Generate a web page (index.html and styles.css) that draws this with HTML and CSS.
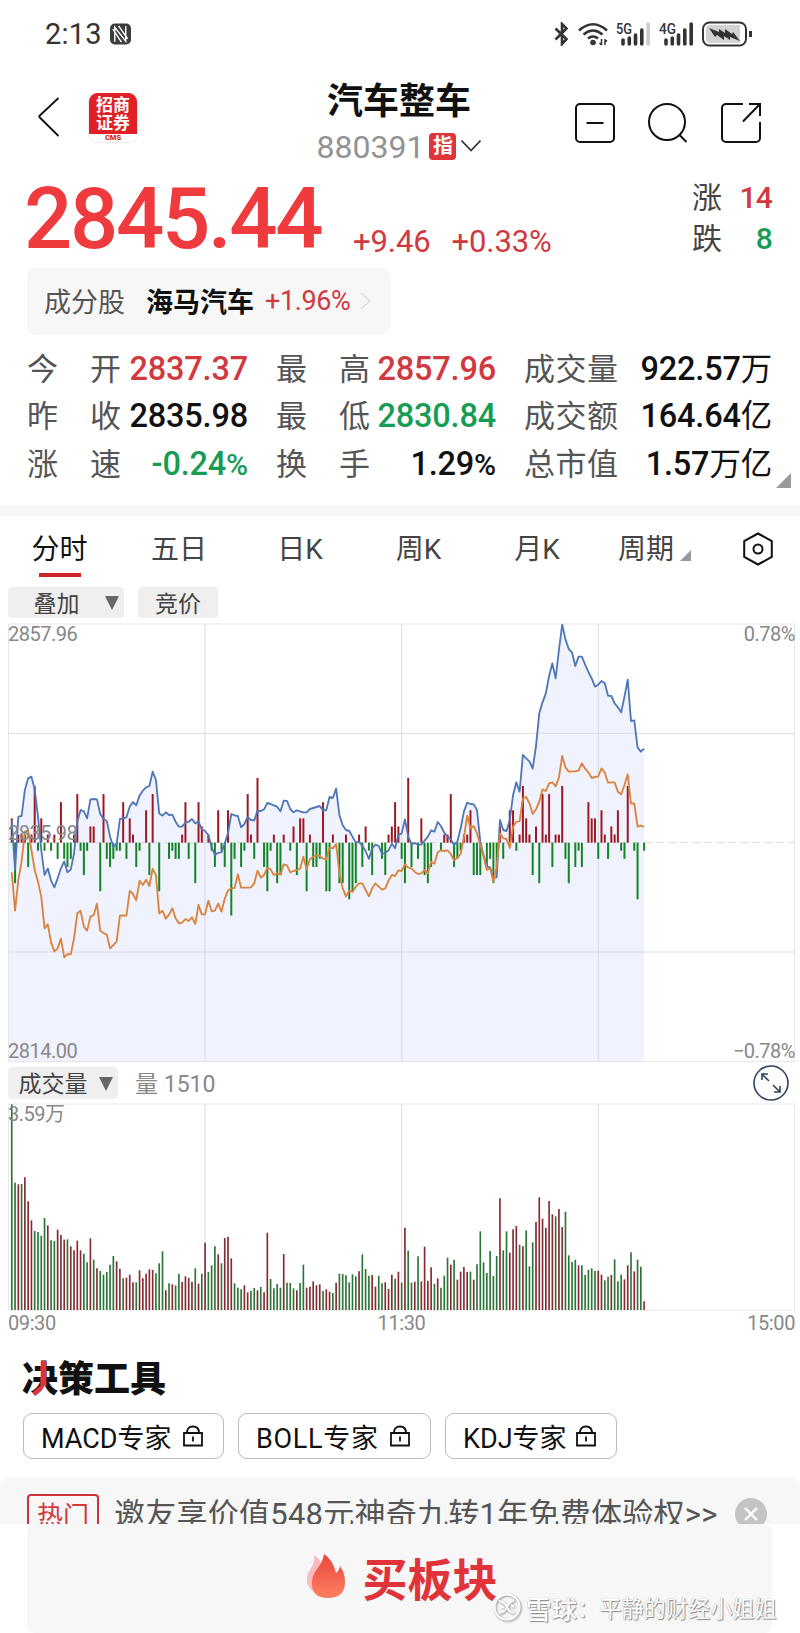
FILE: index.html
```html
<!DOCTYPE html>
<html lang="zh-CN">
  <head>
    <meta charset="UTF-8">
    <meta name="viewport" content="width=device-width, initial-scale=1">
    <title>汽车整车 880391</title>
    <link rel="stylesheet" href="styles.css">
  </head>

  <body>
    <div class="status-bar">
      <span class="status-time">2:13</span>
      <svg class="status-nfc" width="21" height="22" viewBox="0 0 22 22">
        <rect x="0" y="0" width="22" height="22" rx="5" fill="#3c3c3c"/>
        <path d="M5 19V4l11.500 14.500V3M9 2.500l9.500 13.500M3 6l9 13.500" stroke="#fff" stroke-width="1.500" fill="none"/>
      </svg>
      <div class="status-icons">
        <svg width="16" height="24" viewBox="0 0 16 24" fill="none" stroke="#333" stroke-width="2.600">
          <path d="M1.500 6.500l11 10.500-4.500 5V2l4.500 4.500L1.500 17.500"/>
        </svg>
        <svg width="30" height="24" viewBox="0 0 30 24" fill="none" stroke="#333" stroke-width="2.600">
          <path d="M1 8.500Q15-4 29 8.500M5.500 12.500q9.500-8 19 0M10 16.500q5-4 10 0"/>
          <circle cx="15" cy="20.500" r="2.800" fill="#333" stroke="none"/>
          <path d="M23.500 17v6M21.500 21l2 2M27 23v-6M27 17.500l2 2" stroke-width="1.500"/>
        </svg>
        <svg width="35" height="25" viewBox="0 0 35 25">
          <text class="network" x="0" y="11.500" textLength="16" lengthAdjust="spacingAndGlyphs">5G</text>
          <path d="M7 18v4M13.300 16v6M19.500 13v9M25.800 8v14" stroke="#333" stroke-width="3.600" stroke-linecap="round"/>
          <path d="M32.200 2v20" stroke="#ccc" stroke-width="3.600" stroke-linecap="round"/>
        </svg>
        <svg width="35" height="25" viewBox="0 0 35 25">
          <text class="network" x="0" y="11.500" textLength="17" lengthAdjust="spacingAndGlyphs">4G</text>
          <path d="M7 18v4M13.300 16v6M19.500 13v9M25.800 8v14M32.200 2v20" stroke="#333" stroke-width="3.600" stroke-linecap="round"/>
        </svg>
        <svg width="50" height="26" viewBox="0 0 50 26">
          <rect x="1" y="1.500" width="43" height="23" rx="6.500" fill="#fff" stroke="#333" stroke-width="2"/>
          <path d="M8 4h30v18H8a4 4 0 0 1-4-4V8a4 4 0 0 1 4-4z" fill="#d2d2d2"/>
          <path d="M7 7l10 4 0-3 6 4 0-4 7 5 1-2 7 9-10-4 0 3-6-4 0 4-7-5-2 2z" fill="#333"/>
          <path d="M48.500 10v6" stroke="#333" stroke-width="3"/>
        </svg>
      </div>
    </div>

    <div class="header">
      <svg class="back" width="22" height="40" viewBox="0 0 22 40" fill="none" stroke="#111" stroke-width="1.800">
        <path d="M20.500 1L1.800 18.500q-1 1 0 2L20.500 39"/>
      </svg>
      <div class="broker">
        <div class="broker-name">招商<br>证券</div>
        <div class="broker-code">CMS</div>
      </div>
      <div class="title">
        <h1>汽车整车</h1>
        <div class="title-code">
          <span>880391</span>
          <b>指</b>
          <svg width="20" height="12" viewBox="0 0 20 12" fill="none" stroke="#333" stroke-width="1.600"><path d="M.5.5L10 10.500 19.500.5"/></svg>
        </div>
      </div>
      <div class="actions">
        <svg width="40" height="40" viewBox="0 0 40 40" fill="none" stroke="#111" stroke-width="2">
          <rect x="1" y="1" width="38" height="38" rx="4"/><path d="M11.500 20h17"/>
        </svg>
        <svg width="40" height="40" viewBox="0 0 40 40" fill="none" stroke="#111" stroke-width="2">
          <circle cx="19" cy="19" r="18"/><path d="M31.500 32l7 7"/>
        </svg>
        <svg width="41" height="40" viewBox="0 0 41 40" fill="none" stroke="#111" stroke-width="2">
          <path d="M22 1H5a4 4 0 0 0-4 4v30a4 4 0 0 0 4 4h30a4 4 0 0 0 4-4V19M28 1h11v12M39 1L22 18.500"/>
        </svg>
      </div>
    </div>

    <div class="quote">
      <span class="price">2845.44</span>
      <span class="change">+9.46</span>
      <span class="change">+0.33%</span>
      <div class="counts">
        <span>涨</span><span class="count up">14</span>
        <span>跌</span><span class="count down">8</span>
      </div>
    </div>

    <div class="component">
      <span class="component-label">成分股</span>
      <b>海马汽车</b>
      <span class="component-change">+1.96%</span>
      <svg width="11" height="18" viewBox="0 0 11 18" fill="none" stroke="#ddd" stroke-width="1.500"><path d="M1 1l9 8-9 8"/></svg>
    </div>

    <div class="stats">
      <div class="label"><i>今</i><i>开</i></div><div class="value up">2837.37</div>
      <div class="label"><i>最</i><i>高</i></div><div class="value up">2857.96</div>
      <div class="label"><i>成</i><i>交</i><i>量</i></div><div class="value">922.57<i>万</i></div>
      <div class="label"><i>昨</i><i>收</i></div><div class="value">2835.98</div>
      <div class="label"><i>最</i><i>低</i></div><div class="value down">2830.84</div>
      <div class="label"><i>成</i><i>交</i><i>额</i></div><div class="value">164.64<i>亿</i></div>
      <div class="label"><i>涨</i><i>速</i></div><div class="value down">-0.24<small>%</small></div>
      <div class="label"><i>换</i><i>手</i></div><div class="value">1.29<small>%</small></div>
      <div class="label"><i>总</i><i>市</i><i>值</i></div><div class="value">1.57<i>万亿</i></div>
      <span class="stats-more"></span>
    </div>

    <div class="tabs">
      <span class="tab tab-active">分时</span>
      <span class="tab">五日</span>
      <span class="tab">日K</span>
      <span class="tab">周K</span>
      <span class="tab">月K</span>
      <span class="tab tab-period">周期</span>
      <svg class="settings" width="30" height="34" viewBox="0 0 30 34" fill="none" stroke="#111" stroke-width="2">
        <path d="M15 1.500l13.800 7.500v16L15 32.500 1.200 25V9z"/><circle cx="15" cy="17" r="4.500"/>
      </svg>
    </div>

    <div class="toolbar">
      <span class="chip chip-overlay">叠加<i class="caret"></i></span>
      <span class="chip chip-auction">竞价</span>
    </div>

    <div class="chart">
      <svg id="priceChart" width="787" height="439" viewBox="23.500 12 2361 1317"></svg>
      <span class="axis axis-top">2857.96</span>
      <span class="axis axis-middle">2835.98</span>
      <span class="axis axis-bottom">2814.00</span>
      <span class="axis axis-top axis-right">0.78%</span>
      <span class="axis axis-bottom axis-right">−0.78%</span>
    </div>

    <div class="toolbar toolbar-volume">
      <span class="chip chip-volume">成交量<i class="caret"></i></span>
      <span class="volume-now">量 1510</span>
      <svg class="expand" width="36" height="36" viewBox="0 0 36 36" fill="none" stroke="#2f4460" stroke-width="1.600">
        <circle cx="18" cy="18" r="17"/>
        <path d="M16 16L9 9M9 15V9h6M20 20l7 7M27 21v6h-6"/>
      </svg>
    </div>

    <div class="chart chart-volume">
      <svg id="volumeChart" width="787" height="207" viewBox="23.500 132 2361 621"></svg>
      <span class="axis axis-top">3.59万</span>
    </div>
    <div class="times"><span>09:30</span><span>11:30</span><span>15:00</span></div>

    <h2><span class="accent" data-text="决">决</span>策工具</h2>
    <div class="tools">
      <div class="tool">MACD专家<svg class="lock" viewBox="0 0 20 22"><path d="M1 8h18v12.500H1zM4 8q0-6.500 6-6.500T16 8M10 11.500v5"/></svg></div>
      <div class="tool tool-boll">BOLL专家<svg class="lock" viewBox="0 0 20 22"><path d="M1 8h18v12.500H1zM4 8q0-6.500 6-6.500T16 8M10 11.500v5"/></svg></div>
      <div class="tool tool-kdj">KDJ专家<svg class="lock" viewBox="0 0 20 22"><path d="M1 8h18v12.500H1zM4 8q0-6.500 6-6.500T16 8M10 11.500v5"/></svg></div>
    </div>

    <div class="banner">
      <span class="hot">热门</span>
      <span class="banner-text">邀友享价值548元神奇九转1年免费体验权&gt;&gt;</span>
      <svg class="close" width="32" height="32" viewBox="0 0 32 32">
        <circle cx="16" cy="16" r="16" fill="#c4c4c4"/>
        <path d="M10 10l12 12M22 10L10 22" stroke="#fff" stroke-width="2.400"/>
      </svg>
    </div>

    <div class="footer">
      <div class="buy">
        <svg width="40" height="46" viewBox="0 0 40 46">
          <defs>
            <linearGradient id="fire" x1="0" y1="0" x2="0" y2="1">
              <stop offset="0" stop-color="#e8453c"/><stop offset="1" stop-color="#ff8160"/>
            </linearGradient>
          </defs>
          <path d="M8 1q6 4 8 9v29Q1 38 1 26q0-6 4-12 4-5 3-13z" fill="#f8bcc0"/>
          <path d="M18 0q9 6 12 19 3-2 4-7 5 7 5 16 0 16-17 16T6 28q0-6 5-13 6-7 7-15z" fill="url(#fire)"/>
        </svg>
        <span>买板块</span>
      </div>
    </div>

    <div class="watermark">
      <svg width="28" height="28" viewBox="0 0 28 28" fill="none" stroke="#fff" stroke-width="2">
        <circle cx="14" cy="14" r="12.500"/><path d="M6 8q6 1 8 6t7 6M21 7q-5 2-7 7t-8 6M8 13l3 2M18 12l3 2"/>
      </svg>
      <b>雪球</b><span>：平静的财经小姐姐</span>
    </div>

    <script>
      // one value per minute since 09:30
      const price = [
        600, 750, 590, 588, 510, 475, 470, 508, 590, 690, 765, 745, 782, 802, 775, 745, 724, 757, 748, 700,
        605, 570, 574, 595, 538, 537, 538, 582, 597, 603, 650, 680, 672, 597, 595, 592, 560, 546, 556, 527,
        512, 502, 498, 455, 480, 580, 587, 577, 585, 584, 605, 620, 620, 608, 605, 597, 610, 605, 628, 633,
        645, 682, 705, 698, 697, 670, 640, 582, 586, 588, 622, 612, 591, 600, 601, 572, 573, 568, 549, 552,
        556, 560, 574, 542, 543, 567, 577, 571, 574, 577, 577, 567, 564, 561, 558, 571, 570, 531, 534, 506,
        585, 616, 630, 633, 650, 668, 665, 678, 693, 717, 685, 674, 678, 702, 698, 691, 671, 685, 645, 640,
        598, 650, 672, 669, 674, 674, 662, 650, 631, 635, 606, 618, 638, 650, 658, 675, 665, 625, 575, 548,
        552, 553, 570, 665, 705, 740, 742, 773, 772, 600, 630, 633, 600, 525, 487, 515, 405, 415, 424, 446,
        378, 280, 247, 220, 168, 130, 175, 90, 14, 58, 87, 97, 138, 110, 110, 134, 156, 175, 200, 194,
        183, 190, 227, 228, 250, 262, 277, 230, 179, 303, 301, 382, 395, 386
      ];
      const average = [
        757, 872, 780, 725, 635, 632, 690, 750, 785, 830, 925, 913, 968, 994, 985, 956, 1012, 1002, 1003, 955,
        880, 872, 920, 932, 890, 885, 851, 932, 939, 944, 986, 975, 965, 887, 886, 887, 813, 822, 841, 782,
        795, 779, 798, 747, 765, 880, 872, 896, 884, 865, 895, 910, 908, 897, 903, 892, 912, 855, 883, 883,
        842, 874, 872, 851, 875, 836, 812, 805, 804, 763, 803, 803, 803, 802, 790, 752, 773, 765, 744, 748,
        765, 760, 764, 733, 736, 757, 753, 750, 746, 710, 748, 718, 710, 706, 708, 716, 718, 683, 685, 672,
        760, 805, 829, 812, 816, 800, 790, 790, 810, 829, 805, 790, 800, 809, 805, 782, 765, 768, 751, 753,
        733, 743, 745, 756, 762, 760, 750, 760, 725, 731, 697, 691, 693, 691, 702, 721, 714, 702, 652, 587,
        625, 618, 640, 675, 710, 750, 745, 785, 740, 640, 655, 657, 684, 620, 605, 604, 535, 531, 550, 582,
        568, 545, 508, 513, 490, 487, 499, 472, 408, 442, 455, 454, 454, 452, 430, 446, 457, 474, 471, 469,
        445, 458, 488, 487, 487, 515, 523, 495, 463, 551, 550, 620, 617, 621
      ];
      const strength = [
        3, -5, 1, 1, 1, -3, 1, 7, -1, 3, -1, 1, -1, 1, -2, 5, -2, -3, -2, 1,
        6, -1, -4, -1, 2, 2, 0, -6, 6, -2, -3, -2, -1, -1, 5, -2, 3, 1, -3, -1,
        0, 4, -4, 6, 0, -6, 0, 0, -2, -1, -2, -2, 1, 5, -2, 0, -5, 5, 2, 0,
        1, -1, -3, 4, -1, -3, 4, -9, -2, 0, -3, -1, 6, 1, -2, 8, 0, -3, -6, -1,
        1, -5, -4, 1, 0, -1, 2, -4, 3, 3, -6, 1, -3, -3, -2, 5, -6, -6, 1, 0,
        -5, -5, 1, -7, -6, -5, 1, -3, 2, -1, -4, 0, 0, -2, -4, 1, 2, 5, 2, -2,
        -5, 8, -3, 0, -2, 3, -4, -5, -3, 0, 0, -1, 1, 1, 6, -3, -2, -1, 1, 1,
        4, -4, -4, -4, 0, -3, -2, -5, -3, 2, -2, 0, 4, 4, -1, 1, 7, 3, 1, -4,
        2, -5, 6, 1, 6, -3, 1, 1, 7, -2, -5, 0, -3, -1, -3, 0, 5, 3, 3, -2,
        4, 1, -2, 2, 1, 4, -1, -2, 7, 0, -1, -7, 0, -1
      ];
      // negative = falling minute
      const volume = [
        -617, -382, 377, -378, 398, 326, 269, -237, -234, -223, -276, 254, -209, -207, 241, 225, 211, -212, 191, 179,
        208, 179, -169, -143, 215, -151, 125, -117, -106, -114, -136, -162, 146, 124, -95, 97, 106, 83, -83, 119,
        95, 109, 122, 120, -110, -140, -176, 59, -80, 77, -74, -109, 84, 101, 96, 85, -125, 79, -109, 202,
        -114, -134, -191, 167, -140, 216, 220, 155, -80, -67, -62, 74, 53, -57, -66, 59, -69, 53, 232, -93,
        -65, -78, -67, 168, -82, -81, -65, 59, -81, -136, 67, 70, 86, 74, 77, -57, 62, 55, -51, 82,
        -109, -108, -104, -83, -107, -101, 116, -167, -123, -103, 105, 70, -103, -80, 83, 63, 106, -94, 115, -82,
        247, -178, -82, 85, -161, 86, 190, 88, 128, -79, 95, -67, -103, -157, 136, -151, 91, 115, 129, 114,
        -115, 91, -137, -236, -143, -111, -177, -102, -162, 335, -179, -236, 172, 242, 252, -196, 191, -239, -131, -203,
        264, 338, 274, 247, 327, 287, -281, 303, 249, -295, -164, -144, -151, 134, -134, -105, -120, -125, -117, 118,
        106, -89, -100, 105, -152, -86, -106, 92, 134, -173, 116, -151, -130, 26
      ];

      const x = i => (25 + (i + 1) * 9.829).toFixed(1);
      const line = data => data.map((y, i) => `${x(i)},${y}`).join(' ');
      const bars = (data, base, unit, name) => data.map((v, i) =>
        v ? `<path class="${name} ${v > 0 ? 'bar-up' : 'bar-down'}" d="M${x(i)} ${base}V${name === 'volume' ? base - Math.abs(v) : base - v * unit}"/>` : ''
      ).join('');

      document.querySelector('#priceChart').innerHTML = `
        <polygon class="area" points="25,1325 25,640 ${line(price)} ${x(193)},1325"/>
        <path class="grid" d="M25 340H2384M25 996H2384M614.500 12V1325M1204.500 12V1325M1794.500 12V1325"/>
        <path class="frame" d="M25 12H2383V1325H25Z"/>
        <path class="zero" d="M25 668H2384"/>
        ${bars(strength, 668, 24.3, 'strength')}
        <polyline class="price-line" points="${line(price)}"/>
        <polyline class="average-line" points="${line(average)}"/>`;

      document.querySelector('#volumeChart').innerHTML = `
        <path class="grid" d="M614.500 132V749M1204.500 132V749M1794.500 132V749"/>
        <path class="frame" d="M25 132H2383V750H25Z"/>
        ${bars(volume, 750, 1, 'volume')}`;
    </script>
  </body>
</html>
```

FILE: styles.css
```css
* {
  box-sizing: border-box;
}

body {
  position: relative;
  width: 800px;
  height: 1633px;
  margin: 0;
  overflow: hidden;
  background: #fff;
  color: #111;
  font-family: Roboto, "Noto Sans CJK SC", sans-serif;
}

i {
  font-style: normal;
}

.up {
  color: #d13840;
}

.down {
  color: #179c55;
}

/* status bar */
.status-bar {
  height: 68px;
  padding: 0 48px 0 45px;
  display: flex;
  align-items: center;
}

.status-time {
  font-size: 29px;
  color: #333;
  width: 56px;
  letter-spacing: 0.2px;
}

.status-nfc {
  margin-left: 9px;
}

.status-icons {
  margin-left: auto;
  display: flex;
  align-items: center;
  gap: 8px;
}

.network {
  font-size: 14px;
  font-weight: 500;
  fill: #333;
}

/* header */
.header {
  height: 102px;
  padding: 0 38px 0 38px;
  display: grid;
  grid-template-columns: 50px 50px 1fr 187px;
}

.back {
  margin-top: 29px;
}

.broker {
  width: 50px;
  height: 50px;
  margin-top: 25px;
  border: 1px solid #eee;
  border-top: 0;
  border-radius: 9px;
  background: #fff;
  overflow: hidden;
  text-align: center;
}

.broker-name {
  height: 41px;
  padding-top: 3px;
  background: #e02027;
  color: #fff;
  font-size: 17px;
  line-height: 18px;
  font-weight: 700;
}

.broker-code {
  color: #d0262c;
  font-size: 7.500px;
  line-height: 7px;
  font-weight: 900;
}

.title {
  text-align: center;
  padding: 14px 0 0 85px;
}

h1 {
  margin: 0;
  font-size: 36px;
  line-height: 40px;
  font-weight: 700;
}

.title-code {
  display: flex;
  justify-content: center;
  align-items: center;
  gap: 5px;
  height: 48px;
  font-size: 32px;
  color: #929292;
}

.title-code span {
  padding-top: 2px;
}

.title-code b {
  width: 27px;
  height: 27px;
  border-radius: 4px;
  background: #e0333a;
  color: #fff;
  font-size: 20px;
  line-height: 26px;
  text-align: center;
}

.actions {
  display: flex;
  justify-content: space-between;
  padding-top: 35px;
}

/* quote */
.quote {
  height: 98px;
  padding: 0 28px 0 24px;
  display: flex;
  align-items: baseline;
}

.price {
  width: 329px;
  font-size: 85px;
  line-height: 98px;
  font-weight: 500;
  letter-spacing: -2.300px;
  color: #ef3b3d;
}

.change {
  margin-right: 21px;
  padding-top: 3px;
  font-size: 31px;
  color: #d13840;
  letter-spacing: -0.1px;
  transform: translateY(4px);
}

.counts {
  align-self: flex-start;
  margin-left: auto;
  width: 80px;
  padding-top: 7px;
  display: grid;
  grid-template-columns: 31px 1fr;
  font-size: 30px;
  line-height: 41px;
  color: #444;
}

.count {
  text-align: right;
  font-size: 30px;
  font-weight: 500;
  letter-spacing: -0.8px;
}

.count.up {
  color: #d13840;
}

.count.down {
  color: #179c55;
}

.component {
  width: 363px;
  height: 67px;
  margin-left: 27px;
  padding: 0 17px 2px;
  display: flex;
  align-items: center;
  border-radius: 8px;
  background: #f7f7f7;
  font-size: 27px;
}

.component-label {
  color: #555;
  width: 102px;
}

.component-change {
  margin: 0 10px 0 11px;
  color: #d13840;
  letter-spacing: -0.4px;
}

/* stats */
.stats {
  position: relative;
  height: 170px;
  padding: 10.500px 28px 0 27px;
  display: grid;
  grid-template-columns: 94px 127px 122px 126px 122px 1fr;
  grid-auto-rows: 47.7px;
  font-size: 31px;
  line-height: 47.7px;
}

.label {
  width: 94px;
  justify-self: end;
  display: flex;
  justify-content: space-between;
  color: #555;
}

.value {
  text-align: right;
  font-weight: 500;
  font-size: 32.500px;
  letter-spacing: -0.2px;
  white-space: nowrap;
}

.value i {
  font-size: 31.500px;
  font-weight: 400;
}

.value small {
  font-size: 30px;
}

.stats-more {
  position: absolute;
  right: 9px;
  bottom: 17px;
  border-left: 15px solid transparent;
  border-bottom: 15px solid #999;
}

/* tabs */
.tabs {
  height: 78px;
  border-top: 11px solid #f7f7f7;
  padding: 0 27px 0 0;
  display: grid;
  grid-template-columns: 119px 120px 122px 115px 122px 122px 1fr;
  align-items: center;
  text-align: center;
}

.tab {
  position: relative;
  font-size: 28px;
  line-height: 67px;
  color: #444;
}

.tab-active {
  color: #111;
}

.tab-active::after {
  content: "";
  position: absolute;
  left: 39px;
  bottom: 6px;
  width: 42px;
  height: 4px;
  background: #cc2724;
}

.tab-period {
  padding-right: 26px;
}

.tab-period::after {
  content: "";
  position: absolute;
  right: 29px;
  bottom: 22px;
  border-left: 11px solid transparent;
  border-bottom: 11px solid #999;
}

.settings {
  justify-self: end;
  margin-bottom: 2px;
}

.toolbar {
  height: 41px;
  padding: 4px 11px 0 8px;
  display: flex;
}

.chip {
  height: 31px;
  padding-bottom: 2px;
  display: flex;
  align-items: center;
  justify-content: center;
  border-radius: 4px;
  background: #efefef;
  color: #444;
  font-size: 23px;
}

.chip-overlay {
  width: 116px;
  padding-left: 20px;
}

.chip-overlay .caret {
  margin-left: 25px;
}

.chip-auction {
  width: 80px;
  margin-left: 14px;
}

.caret {
  margin-top: 3px;
  border: 7px solid transparent;
  border-top: 14px solid #666;
  border-bottom: 0;
}

/* charts */
.chart {
  position: relative;
  height: 438px;
  margin-left: 8px;
}

.chart svg {
  display: block;
  overflow: visible;
}

.chart-volume {
  height: 206px;
}

.axis {
  position: absolute;
  left: 0;
  font-size: 20px;
  line-height: 20px;
  color: #888;
  letter-spacing: -0.5px;
}

.axis-top {
  top: 0;
}

.axis-middle {
  top: 199px;
}

.axis-bottom {
  bottom: 1px;
}

.axis-right {
  left: auto;
  right: 5px;
}

.area {
  fill: #f0f3fe;
}

.grid,
.frame,
.zero {
  fill: none;
  stroke: #cfd0d8;
  stroke-width: 3;
  stroke-opacity: 0.75;
}

.frame {
  stroke: #dedfe2;
}

.zero {
  stroke-dasharray: 24 12;
}

.strength {
  stroke-width: 6;
}

.volume {
  stroke-width: 5;
}

.bar-up {
  stroke: #9c1824;
}

.bar-down {
  stroke: #138326;
}

.volume.bar-up {
  stroke: #842b32;
}

.volume.bar-down {
  stroke: #2b7637;
}

.price-line,
.average-line {
  fill: none;
  stroke: #4f76b6;
  stroke-width: 5.500;
  stroke-linejoin: round;
}

.average-line {
  stroke: #d9833f;
}

.toolbar-volume {
  height: 42px;
  padding-top: 5px;
}

.chip-volume {
  width: 110px;
  height: 32px;
  padding-left: 5px;
}

.chip-volume .caret {
  margin-left: 11px;
}

.volume-now {
  margin-left: 17px;
  font-size: 23px;
  line-height: 35px;
  color: #888;
}

.expand {
  margin: -2px 0 0 auto;
}

.times {
  height: 46px;
  padding: 3px 5px 0 8px;
  display: flex;
  justify-content: space-between;
  font-size: 20px;
  line-height: 20px;
  color: #888;
  letter-spacing: -0.4px;
}

/* tools */
h2 {
  margin: 0 0 0 22px;
  font-size: 36px;
  line-height: 48px;
  font-weight: 900;
}

.accent {
  position: relative;
  display: inline-block;
}

/* red vertical stroke of the first character */
.accent::after {
  content: attr(data-text);
  position: absolute;
  left: 0;
  top: 0;
  color: #e0333a;
  clip-path: polygon(51% 10%, 68% 10%, 68% 62%, 56% 90%, 25% 92%, 25% 78%, 51% 62%);
}

.tools {
  display: flex;
  gap: 14px;
  margin: 9px 0 18px 23px;
}

.tool {
  width: 201px;
  height: 46px;
  padding: 0 20px 0 17px;
  display: flex;
  align-items: center;
  border: 1px solid #bbb;
  border-radius: 9px;
  font-size: 27px;
}

.tool-boll {
  width: 193px;
  letter-spacing: 0.7px;
}

.tool-kdj {
  width: 172px;
}

.lock {
  width: 20px;
  height: 22px;
  margin-left: auto;
  fill: none;
  stroke: #111;
  stroke-width: 1.800;
}

.banner {
  height: 47px;
  padding: 17px 33px 0 27px;
  display: flex;
  align-items: flex-start;
  overflow: hidden;
  border-radius: 10px 10px 0 0;
  background: #f7f7f7;
}

.hot {
  width: 72px;
  height: 42px;
  border: 2px solid #c9343a;
  border-radius: 4px;
  color: #d13840;
  font-size: 26px;
  line-height: 40px;
  text-align: center;
}

.banner-text {
  margin-left: 15px;
  font-size: 31px;
  line-height: 42px;
  color: #555;
  white-space: nowrap;
  letter-spacing: 0.25px;
}

.close {
  margin: 4px 0 0 auto;
  flex: none;
}

.footer {
  height: 109px;
  padding: 0 28px 0 27px;
}

.buy {
  height: 109px;
  padding: 0 0 3px 5px;
  display: flex;
  align-items: center;
  justify-content: center;
  gap: 16px;
  border-radius: 8px;
  background: #f7f7f7;
  color: #e0333a;
  font-size: 45px;
  font-weight: 700;
}

/* author mark over the footer */
.watermark {
  position: absolute;
  left: 493px;
  top: 1589px;
  height: 36px;
  display: flex;
  align-items: center;
  color: #fff;
  font-size: 22.200px;
  white-space: nowrap;
  text-shadow: 1px 1px 1px #888, 0 0 1px #999;
}

.watermark svg {
  filter: drop-shadow(1px 1px 1px #888);
}

.watermark b {
  margin-left: 5px;
  font-size: 25.500px;
  font-weight: 500;
}
```
